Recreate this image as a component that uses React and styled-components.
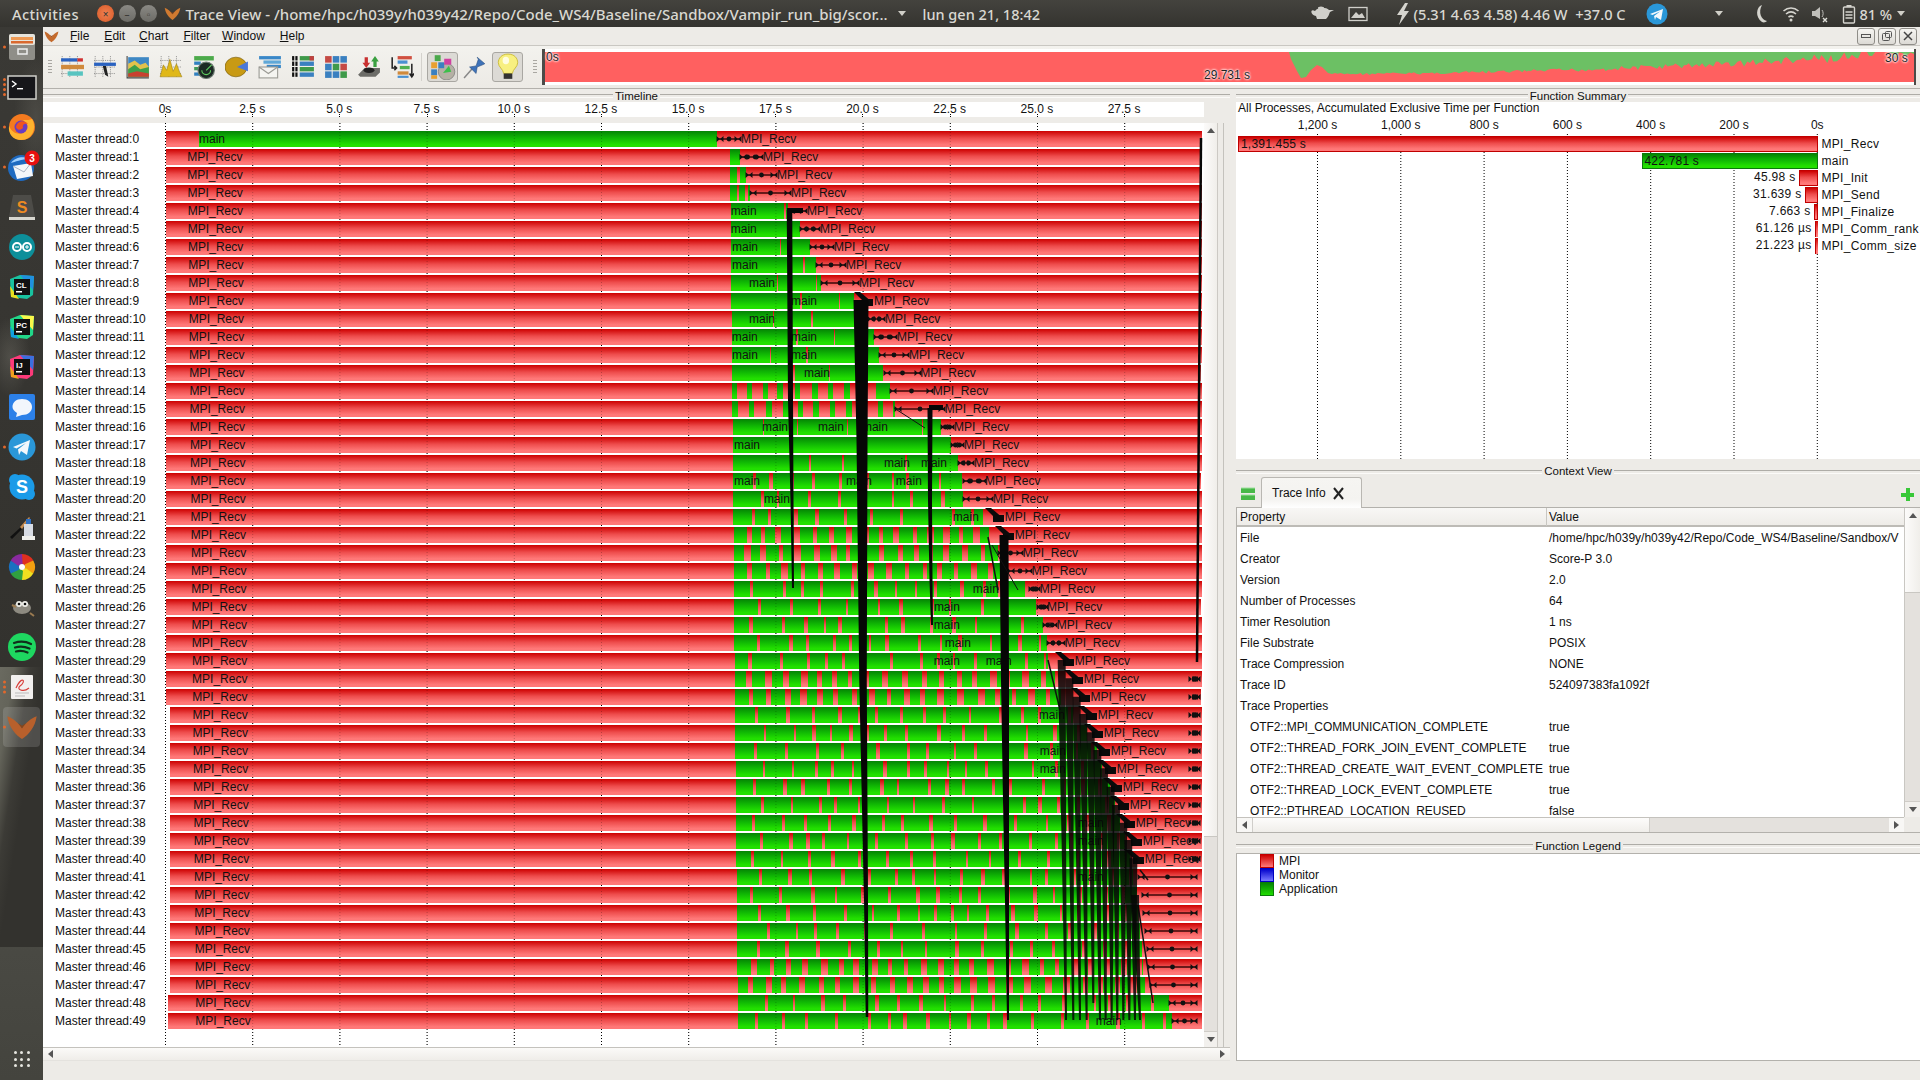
import React from "react";
import styled, { createGlobalStyle } from "styled-components";

const Global = createGlobalStyle`
  html, body { margin: 0; padding: 0; background: #edebe7; }
  * { box-sizing: border-box; }
  #root { width: 1920px; height: 1080px; overflow: hidden; }
`;

const UI = `"Liberation Sans", Arial, sans-serif`;
const SHELL = `"Noto Sans", "Open Sans", sans-serif`;
const RED = "linear-gradient(#cc0000, #ee4c4c 45%, #ff7878 85%)";
const GREEN = "linear-gradient(#048404, #10b804 45%, #22e000 85%)";

/* ---------- deterministic data ---------- */
const makeRand = (seed) => {
  let s = seed;
  return () => {
    s = (s * 9301 + 49297) % 233280;
    return s / 233280;
  };
};

const GE = [717,740,746,750,788,800,810,816,821,854,868,874,879,884,890,895,941,951,958,963,963,983,989,998,1008,1029,1037,1043,1047,1048,1055,1062,1073,1087,1097,1102,1110,1115,1120,1125,1130,1133,1137,1138,1140,1142,1143,1145,1169,1172];
const LAB = [741,763,777,791,807,820,834,846,859,874,885,897,909,921,933,945,954,964,974,986,993,1005,1015,1023,1032,1040,1048,1057,1065,1075,1084,1091,1098,1104,1111,1117,1123,1130,1136,1143,1145];
const KIND = ["solid","solid","thin","thin","sparse","sparse","sparse","sparse","sparse","sparse","sparse","sparse","sparse","sparse","wide","wide","sparse","solid","sparse","notch","notch","notch","bars","bars","bars","notch","notch","notch","notch","notch","bars","bars","notch","notch","notch","notch","notch","notch","notch","notch","notch","notch","notch","notch","notch","notch","bars","bars","notch","notch"];
const KIND_SIZE = {
  sparse: [28, 50, 1, 1],
  notch: [12, 18, 2, 2],
  bars: [9, 5, 4, 3],
  wide: [5, 1, 9, 3],
  thin: [6, 1, 2, 1],
};
const MAINS = {
  0: [199], 4: [731], 5: [731], 6: [732], 7: [732], 8: [749], 9: [791], 10: [749], 11: [732, 791], 12: [732, 791], 13: [804],
  16: [762, 818, 862], 17: [734], 18: [884, 921], 19: [734, 846, 896], 20: [764], 21: [953], 25: [973], 26: [934], 27: [934], 28: [945],
  29: [934, 986], 32: [1039], 34: [1040], 35: [1040], 38: [1078], 39: [1078], 41: [1078], 49: [1096],
};

const buildRow = (i) => {
  const rand = makeRand(i * 137 + 11);
  const start = i >= 48 ? 168 : i >= 32 ? 170 : 166;
  const gs = i === 0 ? 199 : 730 + i * 0.16;
  const ge = GE[i];
  const parts = [[start, gs, "r"]];
  const kind = KIND[i];
  if (kind === "solid") parts.push([gs, ge, "g"]);
  else {
    const [gMin, gVar, rMin, rVar] = KIND_SIZE[kind];
    let x = gs;
    while (x < ge) {
      const g = Math.min(gMin + rand() * gVar, ge - x);
      parts.push([x, x + g, "g"]);
      x += g;
      if (x >= ge - 1) break;
      const r = Math.min(rMin + rand() * rVar, ge - x);
      parts.push([x, x + r, "r"]);
      x += r;
    }
    parts[parts.length - 1][2] = "g";
  }
  parts.push([ge, 1202, "r"]);
  const labels = (MAINS[i] || []).map((x) => [x, "main"]);
  if (i > 0) labels.push([187 + i * 0.17, "MPI_Recv"]);
  if (LAB[i]) labels.push([LAB[i], "MPI_Recv"]);
  let segs = parts.map(([a, b, c]) => ({ a, b, c, t: null }));
  labels.forEach(([x, t]) => {
    const k = segs.findIndex((s) => x >= s.a && x < s.b);
    if (k < 0) return;
    const s = segs[k];
    if (x - s.a < 0.5) {
      s.t = t;
    } else {
      segs.splice(k, 1, { ...s, b: x, t: s.t }, { a: x, b: s.b, c: s.c, t });
    }
  });
  return { start, segs };
};
const ROWS = Array.from({ length: 50 }, (_, i) => buildRow(i));

/* ---------- shell ---------- */
const Page = styled.div`
  width: 1920px;
  height: 1080px;
  display: flex;
  flex-direction: column;
  overflow: hidden;
  font-family: ${UI};
  font-size: 12px;
  color: #111;
  background: #edebe7;
`;
const TopBar = styled.div`
  height: 27px;
  flex: none;
  display: flex;
  align-items: center;
  background: linear-gradient(#44433e, #34332f);
  color: #d9d8d2;
  font-family: ${SHELL};
  font-size: 14.5px;
  font-weight: 500;
  white-space: nowrap;
`;
const Activities = styled.span`
  margin-left: 12px;
  width: 85px;
  font-size: 14.6px;
  letter-spacing: 0.4px;
`;
const WinDot = styled.span`
  width: 17px;
  height: 17px;
  border-radius: 50%;
  margin-right: 4.5px;
  display: flex;
  align-items: center;
  justify-content: center;
  font-size: 10px;
  line-height: 1;
  color: #3c3b37;
  background: ${(p) => (p.$close ? "radial-gradient(#f08050, #d85a28)" : "linear-gradient(#8a8984, #6c6b66)")};
`;
const Title = styled.span`
  width: 712px;
  margin-left: 5px;
  font-size: 15px;
`;
const Caret = styled.span`
  width: 0;
  height: 0;
  border-left: 4.5px solid transparent;
  border-right: 4.5px solid transparent;
  border-top: 5px solid #d0cfc8;
  margin-left: ${(p) => p.$ml || 0}px;
`;
const Clock = styled.span`
  margin-left: 17px;
  width: 386px;
`;
const ShellStat = styled.span`
  margin-left: 4px;
  width: 232px;
  font-size: 14.6px;
  white-space: pre;
`;
const ShellSlot = styled.span`
  display: flex;
  align-items: center;
  margin-left: ${(p) => p.$ml || 0}px;
`;
const Body = styled.div`
  flex: 1;
  display: flex;
  min-height: 0;
`;

/* ---------- dock ---------- */
const Dock = styled.div`
  width: 43px;
  flex: none;
  display: flex;
  flex-direction: column;
  align-items: stretch;
  background:
    radial-gradient(ellipse 22px 60px at 36px 90px, rgba(110,108,100,0.35), transparent),
    radial-gradient(ellipse 20px 40px at 10px 330px, rgba(110,108,100,0.45), transparent),
    linear-gradient(99deg, #6a6a60 0, #64645a 14px, #3c3b36 30px, #33322e 43px) 0 640px / 43px 280px no-repeat,
    linear-gradient(#3a3935, #33322e 640px, #4a4a44 900px, #44443e);
`;
const DockItem = styled.div`
  height: 40px;
  flex: none;
  display: flex;
  align-items: center;
  justify-content: center;
  position: relative;
  background: ${(p) => (p.$active ? "rgba(255,255,255,0.14)" : "transparent")};
  border-radius: 4px;
  margin: 0 ${(p) => (p.$active ? 3 : 0)}px;
`;
const Pips = styled.div`
  position: absolute;
  left: ${(p) => (p.$active ? 0 : 3)}px;
  top: 50%;
  transform: translateY(-50%);
  display: flex;
  flex-direction: column;
  gap: 2px;
`;
const Pip = styled.span`
  width: 3px;
  height: 3px;
  border-radius: 50%;
  background: #e2682c;
`;
const Badge = styled.svg`
  position: absolute;
  right: 3px;
  top: 3px;
`;
const AppsGrid = styled.div`
  margin-top: auto;
  margin-bottom: 13px;
  align-self: center;
  display: grid;
  grid-template-columns: repeat(3, 3px);
  gap: 3.5px;
`;
const AppDot = styled.span`
  width: 3px;
  height: 3px;
  border-radius: 50%;
  background: #e6e6e0;
`;

const CodeTile = ({ label, a, b, c }) => (
  <svg width="30" height="30" viewBox="0 0 30 30">
    <polygon points="3,7 13,3 27,4 26,23 20,27 4,25" fill={a} />
    <polygon points="13,3 27,4 26,18" fill={b} />
    <polygon points="3,14 12,27 4,25" fill={c} />
    <rect x="7" y="7" width="16" height="16" fill="#111" />
    <text x="9" y="16" fontFamily={UI} fontWeight="700" fontSize="8" fill="#fff">{label}</text>
    <rect x="9" y="19" width="6" height="1.5" fill="#fff" />
  </svg>
);
const VLogo = ({ size = 24, color = "#c46a2c" }) => (
  <svg width={size} height={size} viewBox="0 0 24 24">
    <path d="M1 4 C6 6 9 9 12 13 C15 9 18 6 23 4 C22 12 17 18 12 21 C7 18 2 12 1 4Z" fill={color} />
    <path d="M12 13 L9 9 L12 11 L15 9Z" fill="#8a4518" />
  </svg>
);

const dockItems = [
  { pips: 1, icon: (
    <svg width="32" height="32" viewBox="0 0 32 32">
      <rect x="3" y="3" width="26" height="26" rx="2" fill="#8f8e88" />
      <rect x="3" y="3" width="26" height="11" rx="2" fill="#e6e4dc" />
      <rect x="5" y="6" width="22" height="3" fill="#ee9a55" />
      <rect x="5" y="10" width="22" height="2.5" fill="#d9692f" />
      <rect x="12" y="18" width="9" height="5" fill="none" stroke="#eee" strokeWidth="1.5" />
    </svg>) },
  { pips: 4, icon: (
    <svg width="32" height="32" viewBox="0 0 32 32">
      <rect x="2" y="5" width="28" height="23" fill="#16161a" stroke="#d0cfca" strokeWidth="1.5" />
      <path d="M6 10 L10 13 L6 16" stroke="#fff" strokeWidth="1.4" fill="none" />
      <rect x="11" y="17" width="6" height="1.4" fill="#fff" />
    </svg>) },
  { pips: 1, icon: (
    <svg width="32" height="32" viewBox="0 0 32 32">
      <circle cx="16" cy="16" r="13" fill="#f47a1f" />
      <path d="M26 8 C31 16 27 29 15 29 C7 29 2 23 3 15 C6 22 12 24 17 22 C21 20 22 13 17 9 C21 9 24 9 26 8Z" fill="#ffb32e" />
      <circle cx="15" cy="16" r="6.5" fill="#6a3dc0" />
      <path d="M10 16 C11 10 18 8 22 13 C18 12 16 14 17 17 C14 20 11 19 10 16Z" fill="#f0541e" />
    </svg>) },
  { pips: 1, badge: true, icon: (
    <svg width="32" height="32" viewBox="0 0 32 32">
      <circle cx="15" cy="17" r="13" fill="#1f6ac0" />
      <path d="M5 12 C9 6 18 5 24 8 C15 8 9 11 5 12Z" fill="#9fd0ff" />
      <path d="M7 15 L25 12 L27 25 L11 28Z" fill="#f4f6fa" />
      <path d="M7 15 L18 21 L25 12" stroke="#aab4c4" fill="none" />
    </svg>) },
  { icon: (
    <svg width="32" height="32" viewBox="0 0 32 32">
      <polygon points="7,4 25,4 29,26 3,26" fill="#4d4c48" />
      <rect x="3" y="26" width="26" height="3" fill="#d8d7d0" />
      <text x="16" y="22" textAnchor="middle" fontFamily={UI} fontWeight="700" fontSize="16" fill="#ee8a22">S</text>
    </svg>) },
  { icon: (
    <svg width="30" height="30" viewBox="0 0 30 30">
      <circle cx="15" cy="15" r="13" fill="#0d8f9a" />
      <circle cx="10" cy="15" r="4" fill="none" stroke="#fff" strokeWidth="2" />
      <circle cx="20" cy="15" r="4" fill="none" stroke="#fff" strokeWidth="2" />
      <path d="M8 15h4M18 15h4M20 13v4" stroke="#fff" strokeWidth="1" />
    </svg>) },
  { icon: <CodeTile label="CL" a="#19c3a0" b="#2090e0" c="#e8e020" /> },
  { icon: <CodeTile label="PC" a="#21d789" b="#fcf84a" c="#12a0e0" /> },
  { icon: <CodeTile label="IJ" a="#fc3a7a" b="#3a70e0" c="#f0a020" /> },
  { icon: (
    <svg width="28" height="28" viewBox="0 0 28 28">
      <rect x="1" y="1" width="26" height="26" rx="2" fill="#2c80e8" />
      <path d="M14 6 C20 6 24 9.5 24 14 C24 18.5 20 22 14 22 L8 24 L9 20 C6 18 4.5 16 4.5 14 C4.5 9.5 8 6 14 6Z" fill="#f2f6fc" />
    </svg>) },
  { pips: 1, icon: (
    <svg width="30" height="30" viewBox="0 0 30 30">
      <circle cx="15" cy="15" r="13.5" fill="#2a97d8" />
      <path d="M6 15 L23 8 L20 23 L14 19 L12 23 L11 17.5 L19 11 L9.5 16.5Z" fill="#f4f8fc" />
    </svg>) },
  { icon: (
    <svg width="30" height="30" viewBox="0 0 30 30">
      <circle cx="15" cy="15" r="12.5" fill="#1b9be8" />
      <circle cx="8" cy="8" r="6" fill="#1b9be8" />
      <circle cx="22" cy="22" r="6" fill="#1b9be8" />
      <text x="15" y="21" textAnchor="middle" fontFamily={UI} fontWeight="700" fontSize="18" fill="#fff">S</text>
    </svg>) },
  { icon: (
    <svg width="30" height="30" viewBox="0 0 30 30">
      <path d="M3 25 L14 15 L15 17 L5 27Z" fill="#111" />
      <path d="M13 15 L22 5 L23 6 L15 17Z" fill="#c48a50" />
      <rect x="17" y="12" width="9" height="12" fill="#d8dce4" />
      <rect x="15" y="24" width="13" height="4" fill="#f0f0ec" />
      <rect x="19" y="7" width="5" height="5" fill="#3070c0" />
    </svg>) },
  { icon: (
    <svg width="32" height="32" viewBox="0 0 32 32">
      <g transform="translate(16 16)">
        {["#e0301e", "#f4a010", "#f0e020", "#30a040", "#1a70c0", "#8a2aa0"].map((c, i) => (
          <path key={c} d="M-1 -4 L0 -13 A13 13 0 0 1 11.3 -6.5 L3 -1Z" fill={c} transform={`rotate(${i * 60})`} />
        ))}
        <circle r="3" fill="#fff" />
      </g>
    </svg>) },
  { icon: (
    <svg width="28" height="24" viewBox="0 0 28 24">
      <ellipse cx="14" cy="13" rx="9" ry="6" fill="#8d8a80" />
      <circle cx="11" cy="9" r="3" fill="#f0f0ea" />
      <circle cx="17" cy="9" r="3" fill="#f0f0ea" />
      <circle cx="11" cy="9" r="1.3" fill="#111" />
      <circle cx="17" cy="9" r="1.3" fill="#111" />
      <path d="M4 10 L8 12M22 18 L26 21" stroke="#9a7a50" strokeWidth="2" />
    </svg>) },
  { icon: (
    <svg width="30" height="30" viewBox="0 0 30 30">
      <circle cx="15" cy="15" r="14" fill="#1ed760" />
      <path d="M7 11 C13 9 19 9.5 24 12M8 15.5 C13 14 18 14.5 22.5 16.5M9 19.5 C13 18.5 17 19 20.5 20.5" stroke="#10301c" strokeWidth="2.2" fill="none" strokeLinecap="round" />
    </svg>) },
  { pips: 3, icon: (
    <svg width="30" height="30" viewBox="0 0 30 30">
      <rect x="4" y="3" width="22" height="24" rx="1" fill="#f2f0ee" />
      <path d="M9 16 C15 3 20 9 13 14 C9 17 16 21 22 16" stroke="#d8403a" strokeWidth="1.2" fill="none" />
      <path d="M8 21h14M8 24h10" stroke="#bbb" />
    </svg>) },
  { pips: 1, active: true, icon: <VLogo size={32} color="#b8602c" /> },
];

/* ---------- menu + toolbar ---------- */
const Main = styled.div`
  flex: 1;
  min-width: 0;
  display: flex;
  flex-direction: column;
`;
const MenuBar = styled.div`
  height: 19px;
  flex: none;
  display: flex;
  align-items: center;
  border-bottom: 1px solid #c9c7c2;
`;
const MenuLogo = styled.span`
  display: flex;
  margin: 0 5px 0 1px;
`;
const MenuItem = styled.span`
  margin-left: ${(p) => p.$ml}px;
  font-size: 12px;
`;
const WinButtons = styled.div`
  margin-left: auto;
  margin-right: 3px;
  display: flex;
  gap: 3px;
`;
const WinButton = styled.span`
  width: 18px;
  height: 17px;
  border: 1px solid #8f8d88;
  border-radius: 3px;
  background: linear-gradient(#f6f5f2, #dcdad5);
  display: flex;
  align-items: center;
  justify-content: center;
`;
const Toolbar = styled.div`
  height: 43px;
  flex: none;
  display: flex;
  align-items: center;
  padding-left: 5px;
  border-bottom: 1px solid #b3b1ac;
  background: linear-gradient(#f3f2ee, #eceae5);
`;
const Handle = styled.span`
  width: 4px;
  height: 16px;
  flex: none;
  margin-left: ${(p) => p.$ml || 0}px;
  margin-right: ${(p) => p.$mr || 0}px;
  background-image: radial-gradient(#a9a7a2 0.7px, transparent 0.8px);
  background-size: 2px 3px;
`;
const Tool = styled.span`
  flex: none;
  width: 33px;
  height: 30px;
  display: flex;
  align-items: center;
  justify-content: center;
  border-radius: 3px;
`;
const ToolPin = styled(Tool)`
  margin-right: 1px;
`;
const ToolToggle = styled(Tool)`
  width: 31px;
  border: 1px solid #a9a7a2;
  background: #dcdad5;
`;
const ToolSep = styled.span`
  width: 1px;
  height: 28px;
  background: #d4d2cd;
  margin: 0 5px 0 3px;
`;
const Overview = styled.div`
  position: relative;
  margin-left: 5px;
  width: 1374px;
  height: 36px;
  background: #fff;
  border-left: 3px solid #4c4b48;
  border-right: 2px solid #4c4b48;
`;
const OverviewSvg = styled.svg`
  display: block;
  position: absolute;
  left: 0;
  top: 3px;
`;
const OverviewText = styled.span`
  position: absolute;
  left: ${(p) => p.$x}px;
  top: ${(p) => p.$y}px;
  color: #222;
  text-shadow: 0 0 2px #fff, 0 0 2px #fff, 0 0 3px #fff;
  font-size: 12px;
`;

const Bars = ({ rows }) =>
  rows.map(([x, y, w, h, c], i) => <rect key={i} x={x} y={y} width={w} height={h} fill={c} />);
const grid22 = (
  <path d="M2 1v20M9 1v20M16 1v20M1 5h20M1 11h20M1 17h20" stroke="#666" strokeWidth="0.6" strokeDasharray="1 1" />
);
const TOOL_ICONS = [
  <svg width="24" height="24" viewBox="0 0 22 22">{grid22}<Bars rows={[[1,3,15,3,"#2a62c0"],[16,3,5,3,"#d03030"],[1,9,21,4,"#d08a3c"],[7,15,14,4,"#58c4c0"]]} /></svg>,
  <svg width="24" height="24" viewBox="0 0 22 22">{grid22}<Bars rows={[[1,7,20,3,"#2a62c0"]]} /><path d="M9 10 L12 10 L14 20 L11 18Z" fill="#222" /></svg>,
  <svg width="24" height="24" viewBox="0 0 22 22"><rect x="2" y="2" width="19" height="18" fill="#3f88c4" /><path d="M2 8 L8 5 L13 9 L18 7 L21 11 V20 H2Z" fill="#e3c24c" /><path d="M2 13 L8 9 L13 13 L21 11 V20 H2Z" fill="#3d9f4a" /><path d="M2 17 L10 15 L21 17 V20 H2Z" fill="#c84030" /><path d="M1 1v20h20" stroke="#444" fill="none" /></svg>,
  <svg width="24" height="24" viewBox="0 0 22 22">{grid22}<path d="M1 20 L4 9 L7 14 L10 4 L13 15 L16 8 L19 16 L21 20Z" fill="#e0b818" stroke="#9a7c10" strokeWidth="0.5" /></svg>,
  <svg width="24" height="24" viewBox="0 0 22 22"><Bars rows={[[2,1,18,4,"#4caa4a"],[2,6,6,3,"#3080c0"],[2,11,6,3,"#3f9a5a"],[2,16,6,3,"#3080c0"]]} /><circle cx="13" cy="14" r="7.5" fill="#1c2a24" stroke="#6a7a70" /><path d="M13 14 L18 9 M9 14 A4 4 0 0 0 17 14" stroke="#5fd060" fill="none" /></svg>,
  <svg width="24" height="24" viewBox="0 0 22 22"><ellipse cx="10" cy="11" rx="10" ry="9" fill="#c89a14" stroke="#7a5c08" strokeWidth="0.6" /><path d="M11 11 L21 6 L21 15Z" fill="#4a78d8" /></svg>,
  <svg width="24" height="24" viewBox="0 0 22 22"><Bars rows={[[1,1,20,3,"#3a88c8"],[5,5,16,3,"#60a8d8"],[8,9,13,3,"#3a88c8"]]} /><rect x="1" y="11" width="17" height="10" fill="#f4f4f0" stroke="#9a9a94" /><path d="M1 11 L9.5 17 L18 11" stroke="#9a9a94" fill="none" /></svg>,
  <svg width="24" height="24" viewBox="0 0 22 22"><Bars rows={[[1,1,2,4,"#111"],[4,1,2,4,"#111"],[1,6,2,4,"#111"],[4,6,2,4,"#111"],[1,11,2,4,"#111"],[4,11,2,4,"#111"],[1,16,2,4,"#111"],[4,16,2,4,"#111"],[8,1,13,4,"#3f9a4a"],[8,6,13,4,"#3a80c0"],[8,11,13,4,"#3f9a4a"],[8,16,13,4,"#3a80c0"],[17,1,4,4,"#c04040"]]} /></svg>,
  <svg width="24" height="24" viewBox="0 0 22 22"><Bars rows={[[1,1,6,6,"#c44a44"],[8,1,6,6,"#3a80c0"],[15,1,6,6,"#3a80c0"],[1,8,6,6,"#3a80c0"],[8,8,6,6,"#3f9a4a"],[15,8,6,6,"#c44a44"],[1,15,6,6,"#3a80c0"],[8,15,6,6,"#3a80c0"],[15,15,6,6,"#3f9a4a"]]} /></svg>,
  <svg width="24" height="24" viewBox="0 0 22 22"><path d="M1 18 L7 12 H21 V16 L17 20 H3Z" fill="#6c6c68" /><ellipse cx="11" cy="14" rx="5" ry="2.5" fill="#222" /><path d="M7 2 H10 V7 H12 L8.5 12 L5 7 H7Z" fill="#c83030" /><path d="M15 11 V6 H13 L16.5 1 L20 6 H18 V11Z" fill="#3aa040" /></svg>,
  <svg width="24" height="24" viewBox="0 0 22 22"><Bars rows={[[7,1,13,3,"#d05040"],[7,5,9,3,"#4a90d0"],[9,10,9,3,"#50b050"],[7,15,10,3,"#d08a3c"],[7,19,10,2,"#4a90d0"]]} /><path d="M2 2 V12 H6 M4 10 L6 12 L4 14 M20 8 V19 M18 17 L20 20 L22 17" stroke="#222" strokeWidth="1.4" fill="none" /></svg>,
];
const PerspectiveIcon = () => (
  <svg width="26" height="26" viewBox="0 0 22 22">
    <circle cx="14" cy="15" r="7" fill="#b5b0a4" stroke="#777" strokeWidth="0.6" />
    <Bars rows={[[4,1,5,5,"#4aa84a"],[1,7,5,5,"#e8a030"],[7,7,5,5,"#3a80c0"],[1,13,5,5,"#3a80c0"],[1,18,5,3,"#e8a030"],[12,4,6,5,"#d040a0"]]} />
    <path d="M11 16 L16 10 L18 15Z" fill="#3cc04a" />
  </svg>
);
const PinIcon = () => (
  <svg width="24" height="24" viewBox="0 0 22 22">
    <path d="M1 21 L9 12" stroke="#888" strokeWidth="1.4" />
    <path d="M6 11 L12 10 L14 4 L13 2 L20 8 L18 9 L13 11 L12 17Z" fill="#3e72b8" stroke="#24487a" strokeWidth="0.5" />
  </svg>
);
const BulbIcon = () => (
  <svg width="24" height="28" viewBox="0 0 22 26">
    <path d="M11 1 C17 1 20 5 20 9 C20 13 15.5 15 15 19 H7 C6.5 15 2 13 2 9 C2 5 5 1 11 1Z" fill="#f8f080" stroke="#c8b830" strokeWidth="0.8" />
    <ellipse cx="9" cy="7" rx="3" ry="3.5" fill="#fffde0" />
    <rect x="7" y="19" width="8" height="5" fill="#333" />
  </svg>
);

/* ---------- overview ---------- */
const overviewPoints = () => {
  const rand = makeRand(7);
  const pts = ["1289,53", "1291,60", "1297,72", "1301,79", "1306,78", "1311,71", "1317,66", "1322,68", "1328,74"];
  let x = 1332;
  while (x < 1912) {
    const t = (x - 1332) / 580;
    const base = 75 - 19 * t * t - 2 * t;
    const amp = 1.2 + 5 * t * t;
    pts.push(`${x},${(base + (rand() - 0.5) * amp * 2).toFixed(1)}`);
    x += 2 + rand() * 2;
  }
  pts.push("1914,55", "1914,53");
  return pts.join(" ");
};
const OVERVIEW_GREEN = overviewPoints();

/* ---------- panels ---------- */
const Panels = styled.div`
  flex: 1;
  min-height: 0;
  display: flex;
`;
const LeftPanel = styled.div`
  width: 1187px;
  flex: none;
  display: flex;
  flex-direction: column;
`;
const RightPanel = styled.div`
  width: 684px;
  margin-left: 6px;
  flex: none;
  display: flex;
  flex-direction: column;
`;
const GroupTitle = styled.div`
  height: ${(p) => p.$h || 13}px;
  flex: none;
  display: flex;
  align-items: center;
  gap: 2px;
  padding-top: ${(p) => (p.$flush ? 0 : 2)}px;
  font-size: 11.5px;
  line-height: 1;
  &::before, &::after {
    content: "";
    flex: 1;
    height: 2px;
    border-top: 1px solid #aeaca7;
    border-bottom: 1px solid #fbfaf8;
    margin-top: -1px;
  }
`;
const Ruler = styled.div`
  height: 15px;
  flex: none;
  width: 1161px;
  background: #fff;
  display: grid;
  grid-template-columns: repeat(12, 87.2px);
  padding-left: 78.4px;
`;
const RulerCell = styled.span`
  text-align: center;
  line-height: 14px;
  font-size: 12px;
  position: relative;
  &::after {
    content: "";
    position: absolute;
    left: 50%;
    bottom: 0;
    height: 3px;
    border-left: 1px dotted #000;
  }
`;
const Strip = styled.div`
  height: 6px;
  flex: none;
  width: 1161px;
  background: #eeece8;
`;
const ChartFrame = styled.div`
  flex: 1;
  min-height: 0;
  display: flex;
`;
const Chart = styled.div`
  width: 1161px;
  flex: none;
  background: #fff;
  position: relative;
  padding-top: 8px;
  overflow: hidden;
`;
const Layer = styled.svg`
  position: absolute;
  left: 0;
  top: 0;
  z-index: ${(p) => p.$z};
  pointer-events: none;
`;
const Row = styled.div`
  height: 18px;
  display: flex;
  position: relative;
  z-index: 1;
`;
const RowLabel = styled.span`
  width: 123px;
  flex: none;
  padding-left: 12px;
  font-size: 12px;
  line-height: 17px;
  white-space: nowrap;
`;
const Track = styled.div`
  height: 16px;
  flex: none;
  display: flex;
  margin-left: ${(p) => p.$offset}px;
`;
const Seg = styled.div`
  flex: none;
  height: 16px;
  white-space: nowrap;
  font-size: 12px;
  line-height: 16px;
  color: #111;
  z-index: ${(p) => (p.$labelled ? 1 : 0)};
  background: ${(p) => (p.$green ? GREEN : RED)};
`;
const VScroll = styled.div`
  width: 14px;
  flex: none;
  display: flex;
  flex-direction: column;
  background: #e4e1dd;
  border-right: 1px solid #ccc9c4;
`;
const VScrollThumb = styled.div`
  height: ${(p) => p.$h}px;
  flex: none;
  background: linear-gradient(90deg, #fcfbfa, #f0eeea);
  border-bottom: 1px solid #c9c7c2;
  display: flex;
  justify-content: center;
  padding-top: 5px;
`;
const VScrollEnd = styled.div`
  margin-top: auto;
  height: 16px;
  background: #f2f0ed;
  border-top: 1px solid #cfccc7;
  display: flex;
  align-items: center;
  justify-content: center;
`;
const Tri = styled.span`
  width: 0;
  height: 0;
  flex: none;
  ${(p) =>
    p.$d === "up"
      ? "border-left:4.5px solid transparent;border-right:4.5px solid transparent;border-bottom:5px solid #555;"
      : p.$d === "down"
      ? "border-left:4.5px solid transparent;border-right:4.5px solid transparent;border-top:5px solid #555;"
      : p.$d === "left"
      ? "border-top:4.5px solid transparent;border-bottom:4.5px solid transparent;border-right:5px solid #555;"
      : "border-top:4.5px solid transparent;border-bottom:4.5px solid transparent;border-left:5px solid #555;"}
`;
const HScroll = styled.div`
  height: 14px;
  flex: none;
  display: flex;
  align-items: center;
  background: linear-gradient(#fbfaf8, #efede9);
  border-top: 1px solid #c4c2bd;
  border-bottom: 1px solid #e4e2de;
  padding: 0 5px;
  justify-content: space-between;
`;
const BottomGap = styled.div`
  height: 19px;
  flex: none;
`;
const VRule = styled.div`
  width: 1px;
  margin-left: 5px;
  background: #c4c2bd;
  margin-right: 1px;
`;

/* ---- function summary ---- */
const Summary = styled.div`
  height: 357px;
  flex: none;
  background: #fff;
  position: relative;
  overflow: hidden;
`;
const SummaryHead = styled.div`
  height: 15px;
  padding-left: 2px;
  font-size: 12px;
  line-height: 13px;
`;
const SummaryAxis = styled.div`
  height: 19px;
  display: grid;
  grid-template-columns: repeat(7, 83.3px);
  padding-left: 39.85px;
  line-height: 17px;
  text-align: center;
  font-size: 12px;
`;
const SummaryRow = styled.div`
  height: 17px;
  display: flex;
  position: relative;
  z-index: 1;
`;
const SummaryLeft = styled.div`
  width: 581.5px;
  flex: none;
  display: flex;
  justify-content: flex-end;
  align-items: flex-start;
  gap: 3px;
`;
const SummaryValue = styled.span`
  line-height: 15px;
  font-size: 12px;
  letter-spacing: 0.3px;
  white-space: nowrap;
`;
const SummaryBar = styled.div`
  height: 16px;
  flex: none;
  padding-left: 2px;
  line-height: 14px;
  white-space: nowrap;
  letter-spacing: 0.2px;
  border: ${(p) => (p.$thin ? "0" : `1px solid ${p.$green ? "#0a7a0a" : "#c00000"}`)};
  border-left: 1px solid ${(p) => (p.$green ? "#0a7a0a" : "#c00000")};
  background: ${(p) => (p.$green ? GREEN : RED)};
`;
const SummaryLabel = styled.span`
  margin-left: 4px;
  line-height: 17px;
  font-size: 12px;
  letter-spacing: 0.3px;
  white-space: nowrap;
`;

/* ---- context view ---- */
const Splitter = styled.div`
  height: ${(p) => p.$h}px;
  flex: none;
`;
const TabBar = styled.div`
  height: 31px;
  flex: none;
  display: flex;
  align-items: flex-end;
  position: relative;
  border-bottom: 1px solid #b3b1ac;
`;
const TabMenu = styled.span`
  display: flex;
  align-self: center;
  margin: 3px 6px 0 5px;
`;
const Tab = styled.div`
  width: 101px;
  height: 31px;
  margin-bottom: -1px;
  background: linear-gradient(#f6f5f2, #f4f3f0 70%, #fff);
  border: 1px solid #b9b7b2;
  border-bottom: 0;
  border-radius: 3px 3px 0 0;
  display: flex;
  align-items: center;
  gap: 6px;
  padding-left: 10px;
  font-size: 12px;
`;
const PlusIcon = styled.span`
  position: absolute;
  right: 6px;
  top: 11px;
  width: 13px;
  height: 13px;
  background:
    linear-gradient(#38c838, #38c838) center / 4px 13px no-repeat,
    linear-gradient(#38c838, #38c838) center / 13px 4px no-repeat;
`;
const TableBox = styled.div`
  height: 325px;
  flex: none;
  display: grid;
  grid-template-columns: 1fr 16px;
  grid-template-rows: 1fr 15px;
  background: #fff;
  border: 1px solid #b3b1ac;
  border-right: 0;
  border-top: 0;
`;
const TableView = styled.div`
  overflow: hidden;
  min-width: 0;
  min-height: 0;
`;
const TableHead = styled.div`
  height: 19px;
  display: grid;
  grid-template-columns: 309px 1fr;
  background: linear-gradient(#f8f7f5, #eeece8);
  border-bottom: 2px solid #bdbbb6;
`;
const HeadCell = styled.span`
  padding-left: ${(p) => p.$pl}px;
  line-height: 18px;
  border-left: ${(p) => (p.$sep ? "1px solid #c9c7c2" : "0")};
`;
const TableRow = styled.div`
  height: 21px;
  display: grid;
  grid-template-columns: 309px 1fr;
  line-height: 22px;
  font-size: 12px;
  white-space: nowrap;
`;
const Cell = styled.span`
  padding-left: ${(p) => p.$pl}px;
  overflow: hidden;
  letter-spacing: ${(p) => (p.$tight ? "-0.1px" : "0")};
`;
const TableV = styled.div`
  display: flex;
  flex-direction: column;
  background: #e4e1dd;
  border-left: 1px solid #c9c7c2;
`;
const TableH = styled.div`
  display: flex;
  align-items: center;
  background: #e4e1dd;
  border-top: 1px solid #c4c2bd;
  grid-column: 1 / 2;
`;
const HArrow = styled.span`
  width: 15px;
  height: 100%;
  flex: none;
  display: flex;
  align-items: center;
  justify-content: center;
  background: #f8f7f5;
`;
const HThumb = styled.span`
  width: 398px;
  height: 100%;
  flex: none;
  background: linear-gradient(#fdfcfb, #f0eeea);
  border-left: 1px solid #d0ceca;
  border-right: 1px solid #d0ceca;
`;
const HSpacer = styled.span`
  flex: 1;
`;
const Corner = styled.div`
  background: #edebe7;
`;
const Legend = styled.div`
  height: 208px;
  flex: none;
  background: #fff;
  border: 1px solid #b3b1ac;
  border-right: 0;
`;
const LegendRow = styled.div`
  height: 14px;
  display: flex;
  align-items: center;
  gap: 5px;
  padding-left: 23px;
  font-size: 12px;
  line-height: 12px;
`;
const Swatch = styled.span`
  width: 14px;
  height: 14px;
  border: 1px solid ${(p) => p.$b};
  background: ${(p) => p.$bg};
`;

/* ---------- overlay drawing ---------- */
const taper = (pts) => {
  const left = pts.map(([x, y, w]) => `${x - w / 2},${y}`);
  const right = [...pts].reverse().map(([x, y, w]) => `${x + w / 2},${y}`);
  return [...left, ...right].join(" ");
};
const rowY = (i) => 139 + 18 * i;

const Marker = ({ x, y }) => (
  <polygon points={`${x - 3.5},${y - 3} ${x + 3.5},${y + 3} ${x + 3.5},${y - 3} ${x - 3.5},${y + 3}`} fill="#111" />
);
const Message = ({ a, b, y }) => {
  const span = b - a;
  const dots = span < 24 ? [a + span * 0.33, a + span * 0.66] : [(a + b) / 2];
  return (
    <g>
      <line x1={a} x2={b} y1={y} y2={y} stroke="#3a0808" strokeOpacity="0.75" strokeWidth="2" />
      <Marker x={a + 3} y={y} />
      <Marker x={b - 3} y={y} />
      {dots.map((d) => (
        <circle key={d} cx={d} cy={y} r="2.4" fill="#111" />
      ))}
    </g>
  );
};
const BigArrow = ({ x, y }) => (
  <g fill="#0a0a0a">
    <polygon points={`${x - 20},${y - 9} ${x - 14},${y - 9} ${x - 2},${y + 1} ${x - 6},${y + 5}`} />
    <rect x={x - 12} y={y - 2} width="11" height="7" />
  </g>
);

const FAN_TOP = [[305,60],[328,115],[350,170],[370,222],[392,277],[412,330],[432,385],[452,440],[468,495],[490,548],[505,600],[520,655],[525,765]];
const FAN_BOTTOM = [318,340,360,380,400,420,437,455,472,490,508,525,540];

const Overlay = () => (
  <Layer $z={2} width="1161" height="924" viewBox="43 123 1161 924">
    {Array.from({ length: 12 }, (_, i) => (
      <line key={i} x1={165.5 + i * 87.2} x2={165.5 + i * 87.2} y1={123} y2={1045} stroke="#000" strokeOpacity="0.22" strokeDasharray="1 2" />
    ))}
    {GE.map((g, i) => {
      const y = rowY(i);
      if (i === 9 || i === 21 || i === 22 || (i >= 29 && i <= 40)) return <BigArrow key={i} x={LAB[i]} y={y} />;
      if (LAB[i]) return <Message key={i} a={g} b={LAB[i]} y={y} />;
      return <Message key={i} a={g + (i < 48 ? 5 : 0)} b={1197} y={y} />;
    })}
    {Array.from({ length: 11 }, (_, i) => {
      const y = rowY(30 + i);
      return (
        <g key={i} fill="#111">
          <rect x="1192" y={y - 2.5} width="6" height="5" />
          <Marker x={1192} y={y} />
          <Marker x={1197} y={y} />
        </g>
      );
    })}
    <polygon points={taper([[789.5,210,5.5],[790.5,400,5],[792,500,3],[793,588,2]])} fill="#060606" />
    <rect x="787" y="208" width="16" height="5" fill="#060606" />
    <polygon points={taper([[861,300,15],[862,440,11],[863,680,7.5],[866,900,4],[867,1017,2.5]])} fill="#060606" />
    <polygon points={taper([[930,408,5],[930,500,4],[931,580,3],[932,625,2]])} fill="#060606" />
    <rect x="929" y="405" width="14" height="5" fill="#060606" />
    <polygon points={taper([[1004,535,9],[1005,680,8],[1006,800,6],[1007,900,4],[1008,1020,2]])} fill="#060606" />
    <polygon points={taper([[1201,138,2.5],[1197,662,2.5]])} fill="#080808" />
    <line x1="894" y1="408" x2="925" y2="428" stroke="#111" />
    <line x1="988" y1="537" x2="998" y2="590" stroke="#111" strokeWidth="1.5" />
    <line x1="992" y1="545" x2="1018" y2="590" stroke="#111" />
    <line x1="1048" y1="660" x2="1060" y2="710" stroke="#111" strokeWidth="1.5" />
    <line x1="1138" y1="905" x2="1153" y2="1003" stroke="#111" strokeWidth="1.5" />
    <line x1="1140" y1="870" x2="1148" y2="880" stroke="#111" strokeWidth="1.5" />
    {FAN_TOP.map(([x, y], i) => {
      const tx = 960 + x / 3;
      const ty = 640 + y / 3;
      const bx = 960 + FAN_BOTTOM[i] / 3;
      const by = i === 4 ? 1003 : 1020;
      const mx = (tx + bx) / 2;
      const my = (ty + by) / 2;
      return (
        <polygon key={i} points={taper([[tx, ty, 8], [mx, my, 4.5], [bx, by, 2]])} fill="#060606" fillOpacity="0.86" />
      );
    })}
  </Layer>
);

const SUMMARY = [
  { v: "1,391.455 s", w: 579.5, name: "MPI_Recv", inside: true },
  { v: "422.781 s", w: 176, name: "main", inside: true, green: true },
  { v: "45.98 s", w: 19, name: "MPI_Init" },
  { v: "31.639 s", w: 13, name: "MPI_Send" },
  { v: "7.663 s", w: 3, name: "MPI_Finalize" },
  { v: "61.126 µs", w: 1, name: "MPI_Comm_rank", thin: true },
  { v: "21.223 µs", w: 1, name: "MPI_Comm_size", thin: true },
];
const TABLE = [
  ["File", "/home/hpc/h039y/h039y42/Repo/Code_WS4/Baseline/Sandbox/V"],
  ["Creator", "Score-P 3.0"],
  ["Version", "2.0"],
  ["Number of Processes", "64"],
  ["Timer Resolution", "1 ns"],
  ["File Substrate", "POSIX"],
  ["Trace Compression", "NONE"],
  ["Trace ID", "524097383fa1092f"],
  ["Trace Properties", ""],
  ["OTF2::MPI_COMMUNICATION_COMPLETE", "true", 1],
  ["OTF2::THREAD_FORK_JOIN_EVENT_COMPLETE", "true", 1],
  ["OTF2::THREAD_CREATE_WAIT_EVENT_COMPLETE", "true", 1],
  ["OTF2::THREAD_LOCK_EVENT_COMPLETE", "true", 1],
  ["OTF2::PTHREAD_LOCATION_REUSED", "false", 1],
];
const TICKS = ["0s", "2.5 s", "5.0 s", "7.5 s", "10.0 s", "12.5 s", "15.0 s", "17.5 s", "20.0 s", "22.5 s", "25.0 s", "27.5 s"];
const AXIS = ["1,200 s", "1,000 s", "800 s", "600 s", "400 s", "200 s", "0s"];
const MENUS = [["F", "ile", 6], ["E", "dit", 15], ["C", "hart", 14], ["F", "ilter", 15], ["W", "indow", 12], ["H", "elp", 15]];

export default function App() {
  return (
    <Page>
      <Global />
      <TopBar>
        <Activities>Activities</Activities>
        <WinDot $close>×</WinDot>
        <WinDot>–</WinDot>
        <WinDot>▫</WinDot>
        <ShellSlot $ml={2}><VLogo size={17} color="#d07a30" /></ShellSlot>
        <Title>Trace View - /home/hpc/h039y/h039y42/Repo/Code_WS4/Baseline/Sandbox/Vampir_run_big/scor...</Title>
        <Caret />
        <Clock>lun gen 21, 18:42</Clock>
        <ShellSlot>
          <svg width="26" height="18" viewBox="0 0 26 18"><path d="M6 6 C1 3 1 10 7 11 L8 14 H17 C20 11 20 9 21 7 L25 5 L20 5 C17 2 9 2 6 6Z" fill="#d0cfca" /><ellipse cx="12" cy="3" rx="3" ry="1.5" fill="#d0cfca" /></svg>
        </ShellSlot>
        <ShellSlot $ml={12}>
          <svg width="22" height="18" viewBox="0 0 22 18"><rect x="2" y="2.5" width="18" height="13" fill="none" stroke="#d0cfca" strokeWidth="1.3" /><path d="M4 13 L9 7 L12 10 L15 8 L18 13Z" fill="#d0cfca" /></svg>
        </ShellSlot>
        <ShellSlot $ml={27}>
          <svg width="14" height="22" viewBox="0 0 14 22"><path d="M9 0 L1 12 H6 L3 22 L13 8 H8 L12 0Z" fill="#d5d4ce" /></svg>
        </ShellSlot>
        <ShellStat>(5.31 4.63 4.58) 4.46 W  +37.0 C</ShellStat>
        <ShellSlot>
          <svg width="22" height="22" viewBox="0 0 22 22"><circle cx="11" cy="11" r="10.5" fill="#2a97d8" /><path d="M4 11 L17 6 L15 17 L10 14 L9 17 L8 13 L14 8.5 L6.5 12Z" fill="#f4f8fc" /></svg>
        </ShellSlot>
        <Caret $ml={47} />
        <ShellSlot $ml={30}>
          <svg width="16" height="20" viewBox="0 0 16 20"><path d="M9 1 C3 3 2 13 9 18 C11 19 13 18 14 17 C8 16 5 8 9 1Z" fill="#d5d4ce" /></svg>
        </ShellSlot>
        <ShellSlot $ml={13}>
          <svg width="18" height="18" viewBox="0 0 18 18" fill="none" stroke="#d5d4ce" strokeWidth="1.6"><path d="M1.5 6 C6 2 12 2 16.5 6M4 9 C7 6.5 11 6.5 14 9M6.5 12 C8 11 10 11 11.5 12" /><circle cx="9" cy="15" r="1.5" fill="#d5d4ce" stroke="none" /></svg>
        </ShellSlot>
        <ShellSlot $ml={11}>
          <svg width="18" height="18" viewBox="0 0 18 18"><path d="M1 6 H4 L9 2 V14 L4 11 H1Z" fill="#c0bfba" /><path d="M11 5 C12.5 7 12.5 10 11 12" stroke="#c0bfba" fill="none" /><path d="M12 13 L16 17 M16 13 L12 17" stroke="#e0e0da" strokeWidth="1.4" /></svg>
        </ShellSlot>
        <ShellSlot $ml={13}>
          <svg width="14" height="20" viewBox="0 0 14 20"><rect x="1.5" y="3" width="11" height="16" rx="1" fill="none" stroke="#d5d4ce" strokeWidth="1.4" /><rect x="4.5" y="1" width="5" height="2" fill="#d5d4ce" /><path d="M3.5 8h7M3.5 11h7M3.5 14h7" stroke="#d5d4ce" strokeWidth="1.5" /></svg>
        </ShellSlot>
        <ShellSlot $ml={4}>81 %</ShellSlot>
        <Caret $ml={5} />
      </TopBar>
      <Body>
        <Dock>
          {dockItems.map((d, i) => (
            <DockItem key={i} $active={d.active}>
              {d.pips ? (
                <Pips $active={d.active}>
                  {Array.from({ length: d.pips }, (_, k) => <Pip key={k} />)}
                </Pips>
              ) : null}
              {d.icon}
              {d.badge ? (
                <Badge width="16" height="16" viewBox="0 0 16 16">
                  <circle cx="8" cy="8" r="7.5" fill="#e81010" />
                  <text x="8" y="11.5" textAnchor="middle" fontFamily={UI} fontWeight="700" fontSize="10" fill="#fff">3</text>
                </Badge>
              ) : null}
            </DockItem>
          ))}
          <AppsGrid>
            {Array.from({ length: 9 }, (_, i) => <AppDot key={i} />)}
          </AppsGrid>
        </Dock>
        <Main>
          <MenuBar>
            <MenuLogo><VLogo size={15} /></MenuLogo>
            {MENUS.map(([a, b, ml], i) => (
              <MenuItem key={i} $ml={ml}><u>{a}</u>{b}</MenuItem>
            ))}
            <WinButtons>
              <WinButton><svg width="12" height="12"><rect x="1.5" y="4.5" width="9" height="3" fill="none" stroke="#555" /></svg></WinButton>
              <WinButton><svg width="12" height="12"><rect x="1.5" y="3.5" width="7" height="7" rx="1" fill="none" stroke="#555" /><rect x="4.5" y="1.5" width="6" height="6" rx="1" fill="none" stroke="#555" /></svg></WinButton>
              <WinButton><svg width="12" height="12"><path d="M2 2 L10 10 M10 2 L2 10" stroke="#444" strokeWidth="1.5" /></svg></WinButton>
            </WinButtons>
          </MenuBar>
          <Toolbar>
            <Handle $mr={3} />
            {TOOL_ICONS.map((ic, i) => <Tool key={i}>{ic}</Tool>)}
            <ToolSep />
            <ToolToggle><PerspectiveIcon /></ToolToggle>
            <ToolPin><PinIcon /></ToolPin>
            <ToolToggle><BulbIcon /></ToolToggle>
            <Handle $ml={10} />
            <Overview>
              <OverviewSvg width="1369" height="30" viewBox="545 53 1369 30">
                <rect x="545" y="53" width="1369" height="30" fill="#ff6060" />
                <polygon points={OVERVIEW_GREEN} fill="#6cc064" />
              </OverviewSvg>
              <OverviewText $x={1} $y={1}>0s</OverviewText>
              <OverviewText $x={659} $y={19}>29.731 s</OverviewText>
              <OverviewText $x={1340} $y={2}>30 s</OverviewText>
            </Overview>
          </Toolbar>
          <Panels>
            <LeftPanel>
              <GroupTitle>Timeline</GroupTitle>
              <Ruler>
                {TICKS.map((t) => <RulerCell key={t}>{t}</RulerCell>)}
              </Ruler>
              <Strip />
              <ChartFrame>
                <Chart>
                  <Layer $z={0} width="1161" height="924" viewBox="43 123 1161 924">
                    {Array.from({ length: 12 }, (_, i) => (
                      <line key={i} x1={165.5 + i * 87.2} x2={165.5 + i * 87.2} y1={123} y2={1045} stroke="#000" strokeDasharray="1 2" />
                    ))}
                  </Layer>
                  {ROWS.map((r, i) => (
                    <Row key={i}>
                      <RowLabel>Master thread:{i}</RowLabel>
                      <Track $offset={r.start - 166}>
                        {r.segs.map((s, k) => (
                          <Seg key={k} $green={s.c === "g"} $labelled={!!s.t} style={{ width: s.b - s.a }}>
                            {s.t}
                          </Seg>
                        ))}
                      </Track>
                    </Row>
                  ))}
                  <Overlay />
                </Chart>
                <VScroll>
                  <VScrollThumb $h={714}><Tri $d="up" /></VScrollThumb>
                  <VScrollEnd><Tri $d="down" /></VScrollEnd>
                </VScroll>
                <VRule />
              </ChartFrame>
              <HScroll>
                <Tri $d="left" />
                <Tri $d="right" />
              </HScroll>
              <BottomGap />
            </LeftPanel>
            <RightPanel>
              <GroupTitle>Function Summary</GroupTitle>
              <Summary>
                <Layer $z={0} width="684" height="357" viewBox="1236 102 684 357">
                  {[1317.5, 1400.8, 1484.1, 1567.4, 1650.7, 1734, 1817.3].map((x) => (
                    <line key={x} x1={x} x2={x} y1={134} y2={459} stroke="#000" strokeDasharray="1 2" />
                  ))}
                </Layer>
                <SummaryHead>All Processes, Accumulated Exclusive Time per Function</SummaryHead>
                <SummaryAxis>
                  {AXIS.map((t) => <span key={t}>{t}</span>)}
                </SummaryAxis>
                {SUMMARY.map((s) => (
                  <SummaryRow key={s.name}>
                    <SummaryLeft>
                      {s.inside ? null : <SummaryValue>{s.v}</SummaryValue>}
                      <SummaryBar $green={s.green} $thin={s.thin} style={{ width: s.w }}>
                        {s.inside ? s.v : null}
                      </SummaryBar>
                    </SummaryLeft>
                    <SummaryLabel>{s.name}</SummaryLabel>
                  </SummaryRow>
                ))}
              </Summary>
              <Splitter $h={6} />
              <GroupTitle $h={12}>Context View</GroupTitle>
              <TabBar>
                <TabMenu>
                  <svg width="14" height="14" viewBox="0 0 14 14"><rect y="1" width="14" height="5" fill="#48b848" /><rect y="8" width="14" height="5" fill="#48b848" /><path d="M0 1h14M0 8h14" stroke="#9fe09f" /></svg>
                </TabMenu>
                <Tab>
                  Trace Info
                  <svg width="13" height="13" viewBox="0 0 13 13"><path d="M2 1 L11 12 M11 1 L2 12" stroke="#222" strokeWidth="2" /></svg>
                </Tab>
                <PlusIcon />
              </TabBar>
              <TableBox>
                <TableView>
                  <TableHead>
                    <HeadCell $pl={3}>Property</HeadCell>
                    <HeadCell $pl={2} $sep>Value</HeadCell>
                  </TableHead>
                  {TABLE.map(([k, v, ind]) => (
                    <TableRow key={k}>
                      <Cell $pl={ind ? 13 : 3} $tight={ind}>{k}</Cell>
                      <Cell $pl={3}>{v}</Cell>
                    </TableRow>
                  ))}
                </TableView>
                <TableV>
                  <VScrollThumb $h={85}><Tri $d="up" /></VScrollThumb>
                  <VScrollEnd><Tri $d="down" /></VScrollEnd>
                </TableV>
                <TableH>
                  <HArrow><Tri $d="left" /></HArrow>
                  <HThumb />
                  <HSpacer />
                  <HArrow><Tri $d="right" /></HArrow>
                </TableH>
                <Corner />
              </TableBox>
              <Splitter $h={7} />
              <GroupTitle $flush>Function Legend</GroupTitle>
              <Legend>
                <LegendRow><Swatch $b="#c00000" $bg="linear-gradient(#cc0000, #ff7a7a)" />MPI</LegendRow>
                <LegendRow><Swatch $b="#0000c0" $bg="linear-gradient(#0000cc, #7a7aff)" />Monitor</LegendRow>
                <LegendRow><Swatch $b="#0a7a0a" $bg="linear-gradient(#058505, #20dc00)" />Application</LegendRow>
              </Legend>
            </RightPanel>
          </Panels>
        </Main>
      </Body>
    </Page>
  );
}
